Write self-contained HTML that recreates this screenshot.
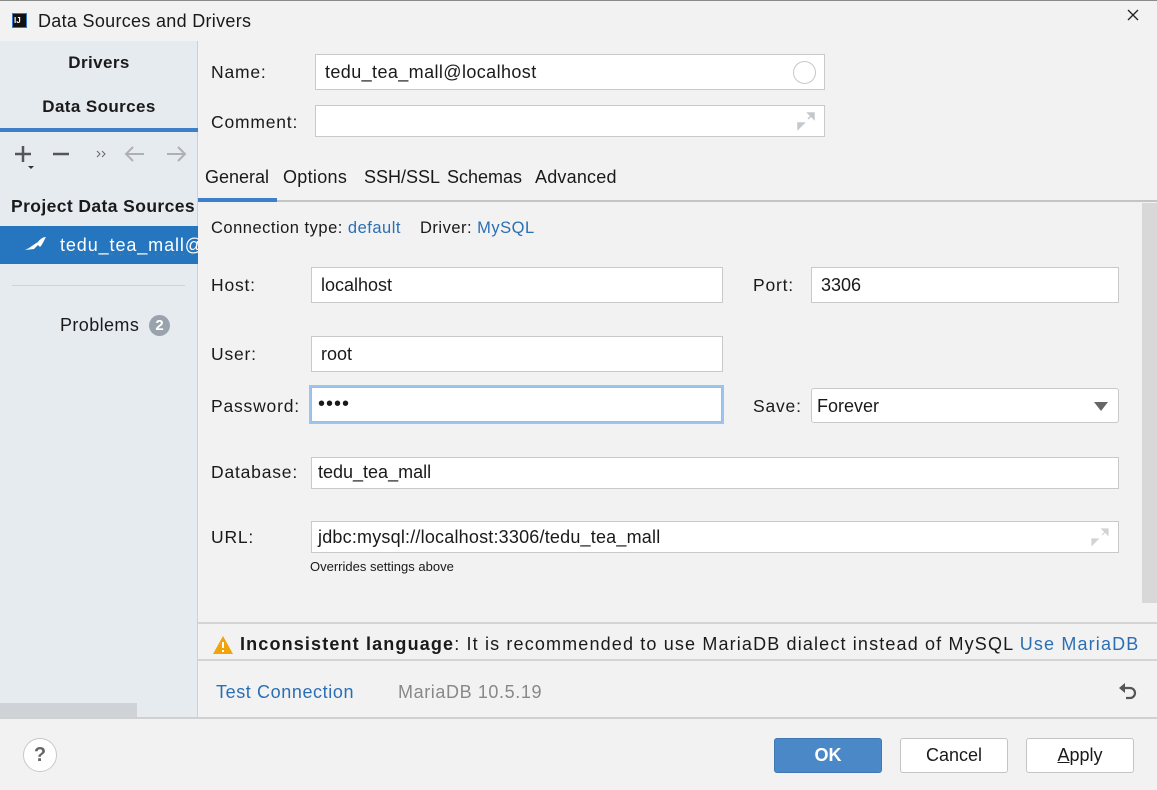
<!DOCTYPE html>
<html><head><meta charset="utf-8"><style>
*{margin:0;padding:0;box-sizing:border-box}
body{width:1157px;height:790px;background:#f2f2f2;font-family:"Liberation Sans",sans-serif;font-size:17px;color:#1a1a1a;position:relative;overflow:hidden}
.a{position:absolute;white-space:nowrap;line-height:20px}
.lb{letter-spacing:0.8px;font-size:17.5px}
.f{position:absolute;background:#fff;border:1px solid #c9c9c9}
.l{color:#2a6fb3}
.b{font-weight:bold}
.btn{position:absolute;height:35px;border:1px solid #c4c4c4;border-radius:3px;background:#fff;text-align:center;line-height:33px;font-size:18px}
</style></head><body>
<div style="position:absolute;left:0;top:0;width:1157px;height:1px;background:#8a8a8a"></div>
<div style="position:absolute;left:12px;top:13px;width:15px;height:15px;background:#111;border:1px solid #2d7bd1"></div>
<div class="a" style="left:14px;top:11px;font-size:8px;color:#fff;font-weight:bold">IJ</div>
<div class="a" style="left:38px;top:11px;font-size:18px;letter-spacing:0.3px">Data Sources and Drivers</div>
<svg class="a" style="left:1127px;top:9px" width="12" height="12"><path d="M1 1L11 11M11 1L1 11" stroke="#222" stroke-width="1.3"/></svg>

<div style="position:absolute;left:0;top:41px;width:198px;height:677px;background:#e6ebf0;border-right:1px solid #d0d0d0"></div>
<div class="a b" style="left:0;width:198px;text-align:center;top:53px;letter-spacing:0.4px">Drivers</div>
<div class="a b" style="left:0;width:198px;text-align:center;top:97px;letter-spacing:0.4px">Data Sources</div>
<div style="position:absolute;left:0;top:128px;width:198px;height:4px;background:#3d7fc9"></div>
<svg class="a" style="left:10px;top:144px" width="180" height="28">
<path d="M5 10H21M13 2V18" stroke="#555" stroke-width="2.5"/><path d="M18 22h6l-3 3z" fill="#333"/>
<path d="M43 10H59" stroke="#555" stroke-width="2.5"/>
<path d="M87 7l3 3-3 3M92 7l3 3-3 3" stroke="#666" fill="none" stroke-width="1"/>
<path d="M116 10h18M123 3l-7 7 7 7" stroke="#b0b0b0" fill="none" stroke-width="2"/>
<path d="M157 10h18M168 3l7 7-7 7" stroke="#b0b0b0" fill="none" stroke-width="2"/>
</svg>
<div class="a b" style="left:11px;top:196px;font-size:17.5px;letter-spacing:0.4px">Project Data Sources</div>
<div style="position:absolute;left:0;top:226px;width:198px;height:38px;background:#2675bf"></div>
<svg class="a" style="left:24px;top:236px" width="24" height="16"><path d="M1 14C6 12 10 8 14 6C16 3 19 1 22 1C20 4 19 8 16 11L14 9L10 13Z" fill="#fff"/></svg>
<div class="a" style="left:60px;top:235px;color:#fff;font-size:18px;letter-spacing:0.9px;text-decoration:underline wavy #d9b24a;text-underline-offset:3px;width:138px;overflow:hidden">tedu_tea_mall@localhost</div>
<div style="position:absolute;left:12px;top:285px;width:173px;height:1px;background:#d0d4d8"></div>
<div class="a" style="left:60px;top:315px;font-size:18px;letter-spacing:0.4px">Problems</div>
<div class="a b" style="left:149px;top:315px;width:21px;height:21px;border-radius:50%;background:#9aa3ad;color:#fff;text-align:center;font-size:15px;line-height:21px">2</div>
<div style="position:absolute;left:0;top:703px;width:137px;height:15px;background:#cfd3d8"></div>

<div class="a lb" style="left:211px;top:62px">Name:</div>
<div class="f" style="left:315px;top:54px;width:510px;height:36px"></div>
<div class="a" style="left:325px;top:62px;font-size:18px;letter-spacing:0.4px">tedu_tea_mall@localhost</div>
<div style="position:absolute;left:793px;top:61px;width:23px;height:23px;border-radius:50%;border:1px solid #c8c8c8"></div>
<div class="a lb" style="left:211px;top:112px">Comment:</div>
<div class="f" style="left:315px;top:105px;width:510px;height:32px"></div>
<svg class="a" style="left:796px;top:111px" width="20" height="20"><path d="M12 2h6v6ZM2 18v-6h6Z M16 4L12 8M4 16l4-4" fill="#c4c8cc" stroke="#c4c8cc" stroke-width="1.5"/></svg>

<div class="a" style="left:205px;top:167px;font-size:18px">General</div>
<div class="a" style="left:283px;top:167px;font-size:18px;letter-spacing:0.3px">Options</div>
<div class="a" style="left:364px;top:167px;font-size:18px">SSH/SSL</div>
<div class="a" style="left:447px;top:167px;font-size:18px">Schemas</div>
<div class="a" style="left:535px;top:167px;font-size:18px;letter-spacing:0.2px">Advanced</div>
<div style="position:absolute;left:198px;top:200px;width:959px;height:2px;background:#c4c4c4"></div>
<div style="position:absolute;left:198px;top:198px;width:79px;height:4px;background:#3d7fc9"></div>
<div style="position:absolute;left:1142px;top:203px;width:15px;height:400px;background:#d8d8d8"></div>

<div class="a" style="left:211px;top:218px;font-size:16.5px;letter-spacing:0.5px">Connection type: <span class="l">default</span></div>
<div class="a" style="left:420px;top:218px;font-size:16.5px;letter-spacing:0.5px">Driver: <span class="l">MySQL</span></div>

<div class="a lb" style="left:211px;top:275px">Host:</div>
<div class="f" style="left:311px;top:267px;width:412px;height:36px"></div>
<div class="a" style="left:321px;top:275px;font-size:18px">localhost</div>
<div class="a lb" style="left:753px;top:275px">Port:</div>
<div class="f" style="left:811px;top:267px;width:308px;height:36px"></div>
<div class="a" style="left:821px;top:275px;font-size:18px">3306</div>

<div class="a lb" style="left:211px;top:344px">User:</div>
<div class="f" style="left:311px;top:336px;width:412px;height:36px"></div>
<div class="a" style="left:321px;top:344px;font-size:18px">root</div>

<div class="a lb" style="left:211px;top:396px">Password:</div>
<div class="f" style="left:309px;top:385px;width:415px;height:39px;border:2px solid #9dc3ef"></div>
<div class="f" style="left:311px;top:387px;width:411px;height:35px;border-color:#b8b8b8"></div>
<div class="a" style="left:318px;top:394px;font-size:20px;letter-spacing:1px">••••</div>
<div class="a lb" style="left:753px;top:396px">Save:</div>
<div class="f" style="left:811px;top:388px;width:308px;height:35px;border-radius:3px"></div>
<div class="a" style="left:817px;top:396px;font-size:18px">Forever</div>
<svg class="a" style="left:1094px;top:401px" width="14" height="10"><path d="M0 1h14L7 10z" fill="#666"/></svg>

<div class="a lb" style="left:211px;top:462px">Database:</div>
<div class="f" style="left:311px;top:457px;width:808px;height:32px"></div>
<div class="a" style="left:318px;top:462px;font-size:18px">tedu_tea_mall</div>

<div class="a lb" style="left:211px;top:527px">URL:</div>
<div class="f" style="left:311px;top:521px;width:808px;height:32px"></div>
<div class="a" style="left:318px;top:527px;font-size:18px;letter-spacing:0.2px">jdbc:mysql://localhost:3306/tedu_tea_mall</div>
<svg class="a" style="left:1090px;top:527px" width="20" height="20"><path d="M12 2h6v6ZM2 18v-6h6Z M16 4L12 8M4 16l4-4" fill="#d0d3d6" stroke="#d0d3d6" stroke-width="1.2"/></svg>
<div class="a" style="left:310px;top:557px;font-size:13px">Overrides settings above</div>

<div style="position:absolute;left:198px;top:622px;width:959px;height:2px;background:#d4d4d4"></div>
<svg class="a" style="left:212px;top:635px" width="22" height="20"><path d="M11 1L21 19H1Z" fill="#f0a30a"/><path d="M11 7v6M11 15v2" stroke="#fff" stroke-width="2"/></svg>
<div class="a" style="left:240px;top:634px;font-size:18px;letter-spacing:1.15px"><b>Inconsistent language</b>: It is recommended to use MariaDB dialect instead of MySQL <span class="l">Use MariaDB</span></div>
<div style="position:absolute;left:198px;top:659px;width:959px;height:2px;background:#d4d4d4"></div>
<div class="a l" style="left:216px;top:682px;font-size:18px;letter-spacing:0.6px">Test Connection</div>
<div class="a" style="left:398px;top:682px;font-size:18px;color:#888;letter-spacing:0.6px">MariaDB 10.5.19</div>
<svg class="a" style="left:1118px;top:682px" width="20" height="20"><path d="M3 6h9a5 5 0 0 1 0 10H8" stroke="#555" stroke-width="2.2" fill="none"/><path d="M1 6l6-5v10z" fill="#555"/></svg>
<div style="position:absolute;left:0;top:717px;width:1157px;height:2px;background:#d0d0d0"></div>

<div style="position:absolute;left:23px;top:738px;width:34px;height:34px;border-radius:50%;border:1px solid #c8c8c8;background:#fff;text-align:center;line-height:32px;font-weight:bold;font-size:20px;color:#666">?</div>
<div class="btn" style="left:774px;top:738px;width:108px;background:#4a88c7;border-color:#3f78b2;color:#fff;font-weight:bold">OK</div>
<div class="btn" style="left:900px;top:738px;width:108px">Cancel</div>
<div class="btn" style="left:1026px;top:738px;width:108px"><u>A</u>pply</div>
</body></html>
